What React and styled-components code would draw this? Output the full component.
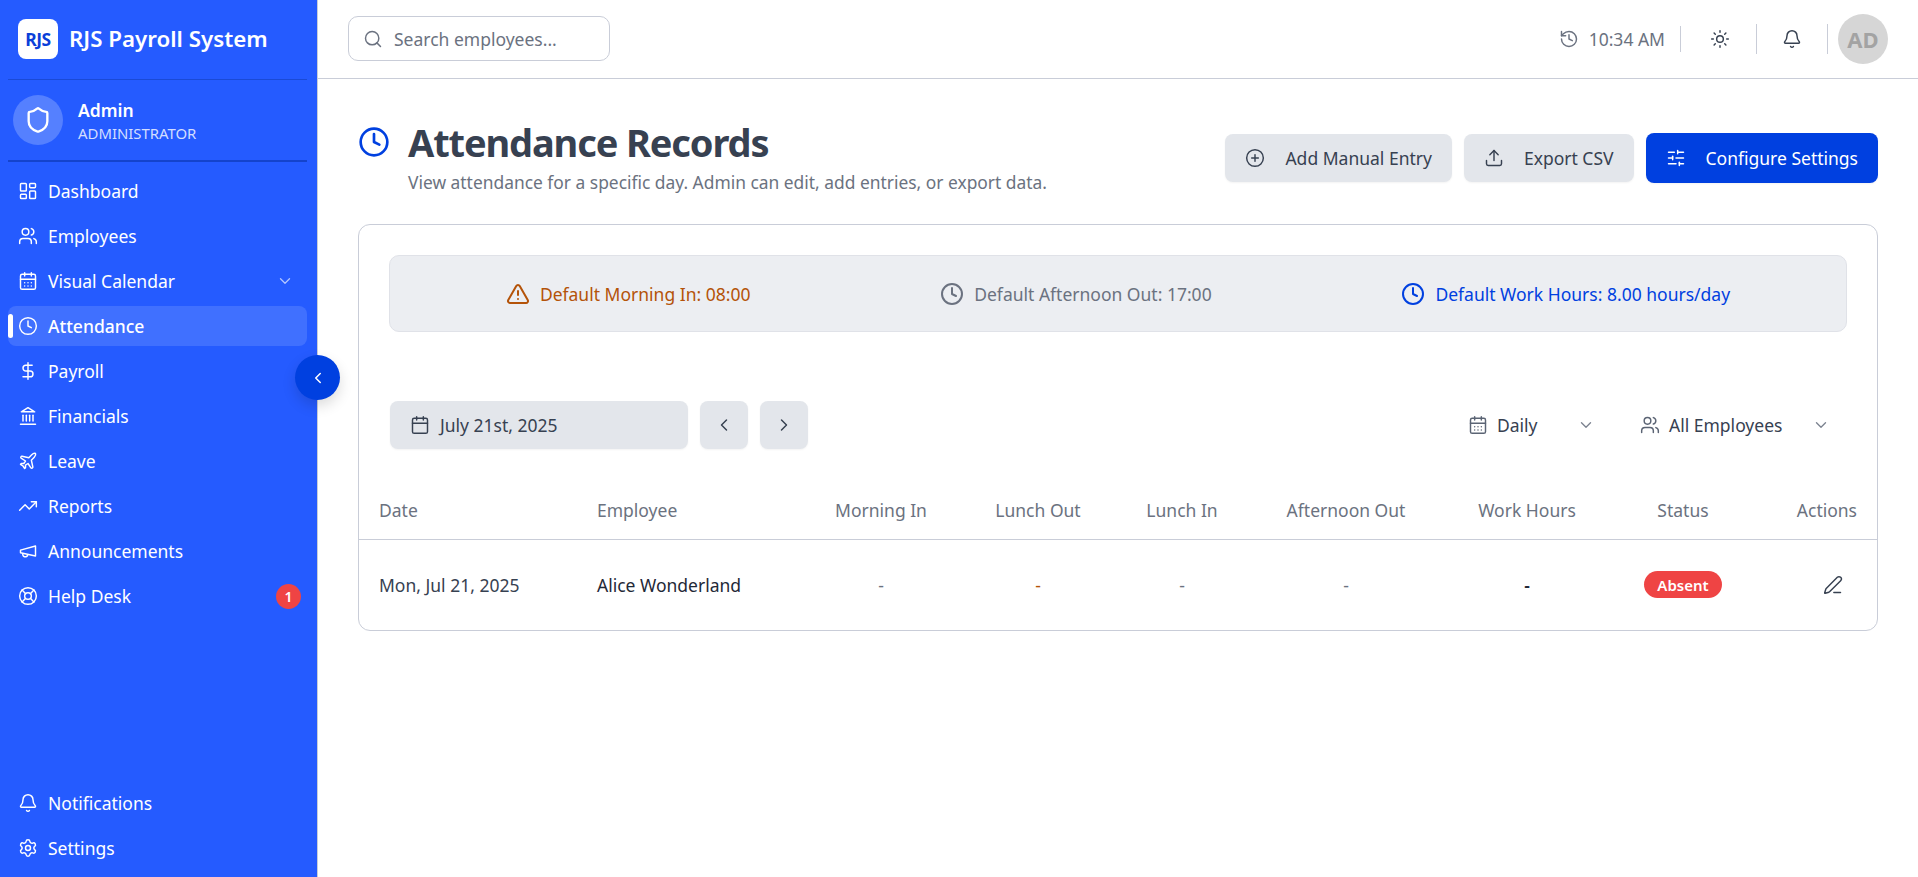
import React from "react";
import styled, { createGlobalStyle, css } from "styled-components";
import {
  LayoutDashboard, Users, CalendarDays, ChevronDown, Clock, DollarSign, Plane,
  TrendingUp, LifeBuoy, Bell, Settings, Shield, Search, History, Sun, CirclePlus,
  Upload, SlidersHorizontal, TriangleAlert, Calendar, ChevronLeft, ChevronRight, PenLine,
} from "lucide-react";

const Global = createGlobalStyle`
  * { box-sizing: border-box; }
  html, body { margin: 0; padding: 0; background: #fff; }
  body { font-family: "Noto Sans", "Open Sans", sans-serif; color: #374151; }
`;

const thinIcons = css`
  svg {
    stroke-width: 1.75;
  }
`;

const Shell = styled.div`
  display: flex;
  height: 877px;
  overflow: hidden;
  position: relative;
`;

const Sidebar = styled.aside`
  width: 318px;
  flex: none;
  background: #255bff;
  border-right: 1px solid #c9cdd8;
  color: #fff;
  display: flex;
  flex-direction: column;
  padding: 0 10px 9px 8px;
`;

const Brand = styled.div`
  height: 80px;
  flex: none;
  display: flex;
  align-items: center;
  gap: 11px;
  padding: 0 0 2px 10px;
  border-bottom: 1px solid #1a4ad6;
`;

const LogoBox = styled.div`
  width: 40px;
  height: 40px;
  border-radius: 8px;
  background: #fff;
  color: #0b3fd9;
  font-size: 17.5px;
  font-weight: 700;
  letter-spacing: -0.5px;
  display: flex;
  align-items: center;
  justify-content: center;
`;

const BrandName = styled.div`
  font-size: 22.3px;
  font-weight: 600;
  white-space: nowrap;
`;

const Profile = styled.div`
  height: 82px;
  flex: none;
  display: flex;
  align-items: center;
  gap: 15px;
  padding-left: 5px;
  border-bottom: 2px solid #1443cc;
`;

const ProfileAvatar = styled.div`
  width: 50px;
  height: 50px;
  border-radius: 50%;
  background: #5580ff;
  display: flex;
  align-items: center;
  justify-content: center;
`;

const ProfileText = styled.div`
  display: flex;
  flex-direction: column;
  gap: 1px;
  padding-top: 2px;
`;

const ProfileName = styled.div`
  font-size: 17.5px;
  font-weight: 600;
  line-height: 22px;
`;

const ProfileRole = styled.div`
  font-size: 14.9px;
  line-height: 22px;
  color: #d3deff;
`;

const Nav = styled.nav`
  display: flex;
  flex-direction: column;
  gap: 5px;
  padding-top: 9px;
`;

const BottomNav = styled(Nav)`
  margin-top: auto;
  padding-top: 0;
`;

const NavItem = styled.div`
  position: relative;
  height: 40px;
  display: flex;
  align-items: center;
  gap: 10px;
  padding: 0 10px;
  border-radius: 8px;
  font-size: 17.5px;
  background: ${(p) => (p.$active ? "#4070ff" : "transparent")};
  font-weight: ${(p) => (p.$active ? 500 : 400)};
  ${thinIcons}
`;

const ActiveBar = styled.span`
  position: absolute;
  left: 0;
  top: 8px;
  width: 5px;
  height: 24px;
  border-radius: 3px;
  background: #fff;
`;

const NavLabel = styled.span`
  flex: 1;
`;

const NavChevron = styled(ChevronDown)`
  opacity: 0.65;
  margin-right: 3px;
`;

const NavBadge = styled.span`
  width: 25px;
  height: 25px;
  border-radius: 50%;
  background: #ef4444;
  color: #fff;
  font-size: 14px;
  font-weight: 600;
  display: flex;
  align-items: center;
  justify-content: center;
  margin-right: -4px;
`;

const CollapseButton = styled.button`
  position: absolute;
  left: 295px;
  top: 355px;
  width: 45px;
  height: 45px;
  padding: 0;
  border: 0;
  border-radius: 50%;
  background: #0040e0;
  color: #fff;
  display: flex;
  align-items: center;
  justify-content: center;
  box-shadow: 0 6px 14px rgba(0, 0, 0, 0.14);
`;

const Main = styled.div`
  flex: 1;
  min-width: 0;
  display: flex;
  flex-direction: column;
`;

const TopBar = styled.header`
  height: 79px;
  flex: none;
  display: flex;
  align-items: center;
  justify-content: space-between;
  padding: 0 30px 1px 30px;
  border-bottom: 1px solid #c9cdd8;
`;

const SearchBox = styled.div`
  width: 262px;
  height: 45px;
  border: 1px solid #c9cdd8;
  border-radius: 10px;
  display: flex;
  align-items: center;
  gap: 11px;
  padding: 0 14px;
  color: #6b7280;
  font-size: 17.5px;
  ${thinIcons}
`;

const TopTools = styled.div`
  display: flex;
  align-items: center;
`;

const TimeText = styled.div`
  display: flex;
  align-items: center;
  gap: 10px;
  color: #6b7280;
  font-size: 17.5px;
  padding-right: 15px;
  height: 26px;
  border-right: 1px solid #c9cdd8;
  ${thinIcons}
`;

const ToolButton = styled.div`
  width: ${(p) => p.$w}px;
  height: 30px;
  padding-left: ${(p) => p.$shift || 0}px;
  display: flex;
  align-items: center;
  justify-content: center;
  color: #374151;
  border-right: 1px solid #c9cdd8;
  ${thinIcons}
`;

const UserAvatar = styled.div`
  width: 50px;
  height: 50px;
  margin-left: 10px;
  border-radius: 50%;
  background: #d6d6d6;
  color: #a3a3a3;
  font-size: 22px;
  font-weight: 700;
  display: flex;
  align-items: center;
  justify-content: center;
`;

const Page = styled.main`
  padding: 43px 40px 0;
`;

const PageHead = styled.div`
  display: flex;
  justify-content: space-between;
  align-items: center;
`;

const TitleBlock = styled.div`
  display: grid;
  grid-template-columns: 34px 1fr;
  column-gap: 16px;
  align-items: center;
`;

const Title = styled.h1`
  margin: 0;
  font-size: 38px;
  line-height: 40px;
  font-weight: 700;
  letter-spacing: -1.12px;
  color: #374151;
`;

const Subtitle = styled.p`
  grid-column: 2;
  margin: 8px 0 0;
  font-size: 17.4px;
  line-height: 24px;
  color: #6b7280;
`;

const TitleIcon = styled(Clock)`
  color: #0040e0;
`;

const Actions = styled.div`
  display: flex;
  align-items: center;
  gap: 12px;
  padding-bottom: 1px;
`;

const Button = styled.button`
  height: ${(p) => (p.$primary ? 50 : 48)}px;
  padding: 0 20px;
  border: 0;
  border-radius: 8px;
  display: flex;
  align-items: center;
  gap: 20px;
  font-family: inherit;
  font-size: 17.5px;
  font-weight: 400;
  background: ${(p) => (p.$primary ? "#0040e0" : "#e3e6eb")};
  color: ${(p) => (p.$primary ? "#fff" : "#374151")};
  box-shadow: 0 1px 2px rgba(0, 0, 0, 0.05);
  ${thinIcons}
`;

const Card = styled.section`
  margin-top: 30px;
  border: 1px solid #c9cdd8;
  border-radius: 12px;
  overflow: hidden;
`;

const CardTop = styled.div`
  padding: 30px 30px 0;
`;

const Banner = styled.div`
  height: 77px;
  padding: 0 21px;
  display: flex;
  align-items: center;
  justify-content: space-around;
  background: #eceef2;
  border: 1px solid #e0e2e8;
  border-radius: 10px;
`;

const BannerItem = styled.div`
  display: flex;
  align-items: center;
  gap: 10px;
  font-size: 17.5px;
  color: ${(p) => p.$color};
`;

const Filters = styled.div`
  margin-top: 69px;
  padding-left: 1px;
  padding-right: 7px;
  display: flex;
  align-items: center;
  justify-content: space-between;
`;

const FilterGroup = styled.div`
  display: flex;
  align-items: center;
  gap: 12px;
`;

const SelectGroup = styled.div`
  display: flex;
  align-items: center;
  gap: 25px;
`;

const DateButton = styled(Button)`
  width: 298px;
  gap: 10px;
  padding: 0 20px;
`;

const IconButton = styled(Button)`
  width: 48px;
  padding: 0;
  justify-content: center;
`;

const SelectTrigger = styled.div`
  width: ${(p) => p.$w}px;
  height: 48px;
  display: flex;
  align-items: center;
  gap: 9px;
  padding: 0 10px;
  font-size: 17.5px;
  color: #374151;
  ${thinIcons}
  svg {
    color: #5b6474;
  }
`;

const SelectLabel = styled.span`
  flex: 1;
`;

const MutedChevron = styled(ChevronDown)`
  opacity: 0.8;
`;

const Table = styled.table`
  width: 100%;
  table-layout: fixed;
  border-collapse: collapse;
  margin-top: 32px;
  font-size: 17.5px;
`;

const Th = styled.th`
  height: 58px;
  padding: 0 20px;
  font-weight: 400;
  color: #6b7280;
  text-align: ${(p) => p.$align || "center"};
  border-bottom: 1px solid #c9cdd8;
  white-space: nowrap;
`;

const Td = styled.td`
  height: 91px;
  padding: 0 20px;
  text-align: ${(p) => p.$align || "center"};
  color: ${(p) => p.$color || "#6b7280"};
  font-weight: ${(p) => p.$weight || 400};
  white-space: nowrap;
`;

const Badge = styled.span`
  display: inline-flex;
  align-items: center;
  justify-content: center;
  width: 78px;
  height: 27px;
  border-radius: 14px;
  background: #ef4444;
  color: #fff;
  font-size: 15px;
  font-weight: 600;
`;

const EditButton = styled.button`
  width: 48px;
  height: 40px;
  padding: 0;
  border: 0;
  background: none;
  color: #374151;
  display: inline-flex;
  align-items: center;
  justify-content: center;
  vertical-align: middle;
  ${thinIcons}
`;

function LineIcon({ size = 20, children }) {
  return (
    <svg width={size} height={size} viewBox="0 0 24 24" fill="none" stroke="currentColor" strokeWidth="2" strokeLinecap="round" strokeLinejoin="round">
      {children}
    </svg>
  );
}

const OldMegaphone = ({ size }) => (
  <LineIcon size={size}>
    <path d="m3 11 18-5v12L3 14v-3z" />
    <path d="M11.6 16.8a3 3 0 1 1-5.8-1.6" />
  </LineIcon>
);

const OldLandmark = ({ size }) => (
  <LineIcon size={size}>
    <path d="M3 22h18" />
    <path d="M6 18v-7" />
    <path d="M10 18v-7" />
    <path d="M14 18v-7" />
    <path d="M18 18v-7" />
    <polygon points="12 2 20 7 4 7" />
  </LineIcon>
);

const mainNav = [
  [LayoutDashboard, "Dashboard"],
  [Users, "Employees"],
  [CalendarDays, "Visual Calendar", "chev"],
  [Clock, "Attendance", "active"],
  [DollarSign, "Payroll"],
  [OldLandmark, "Financials"],
  [Plane, "Leave"],
  [TrendingUp, "Reports"],
  [OldMegaphone, "Announcements"],
  [LifeBuoy, "Help Desk", "badge"],
];

const widths = [218, 225, 158, 156, 132, 196, 166, 146, 121];

export default function App() {
  return (
    <Shell>
      <Global />
      <Sidebar>
        <Brand>
          <LogoBox>RJS</LogoBox>
          <BrandName>RJS Payroll System</BrandName>
        </Brand>
        <Profile>
          <ProfileAvatar>
            <Shield size={28} />
          </ProfileAvatar>
          <ProfileText>
            <ProfileName>Admin</ProfileName>
            <ProfileRole>ADMINISTRATOR</ProfileRole>
          </ProfileText>
        </Profile>
        <Nav>
          {mainNav.map(([Icon, label, kind]) => (
            <NavItem key={label} $active={kind === "active"}>
              {kind === "active" && <ActiveBar />}
              <Icon size={20} />
              <NavLabel>{label}</NavLabel>
              {kind === "chev" && <NavChevron size={18} />}
              {kind === "badge" && <NavBadge>1</NavBadge>}
            </NavItem>
          ))}
        </Nav>
        <BottomNav>
          <NavItem>
            <Bell size={20} />
            <NavLabel>Notifications</NavLabel>
          </NavItem>
          <NavItem>
            <Settings size={20} />
            <NavLabel>Settings</NavLabel>
          </NavItem>
        </BottomNav>
      </Sidebar>
      <CollapseButton aria-label="Collapse sidebar">
        <ChevronLeft size={18} />
      </CollapseButton>
      <Main>
        <TopBar>
          <SearchBox>
            <Search size={20} />
            <span>Search employees...</span>
          </SearchBox>
          <TopTools>
            <TimeText>
              <History size={20} />
              <span>10:34 AM</span>
            </TimeText>
            <ToolButton $w={76} $shift={3}>
              <Sun size={20} />
            </ToolButton>
            <ToolButton $w={71}>
              <Bell size={20} />
            </ToolButton>
            <UserAvatar>AD</UserAvatar>
          </TopTools>
        </TopBar>
        <Page>
          <PageHead>
            <TitleBlock>
              <TitleIcon size={32} />
              <Title>Attendance Records</Title>
              <Subtitle>View attendance for a specific day. Admin can edit, add entries, or export data.</Subtitle>
            </TitleBlock>
            <Actions>
              <Button>
                <CirclePlus size={20} />
                Add Manual Entry
              </Button>
              <Button>
                <Upload size={20} />
                Export CSV
              </Button>
              <Button $primary>
                <SlidersHorizontal size={20} />
                Configure Settings
              </Button>
            </Actions>
          </PageHead>
          <Card>
            <CardTop>
              <Banner>
                <BannerItem $color="#b45309">
                  <TriangleAlert size={24} />
                  Default Morning In: 08:00
                </BannerItem>
                <BannerItem $color="#6b7280">
                  <Clock size={24} />
                  Default Afternoon Out: 17:00
                </BannerItem>
                <BannerItem $color="#0040e0">
                  <Clock size={24} />
                  Default Work Hours: 8.00 hours/day
                </BannerItem>
              </Banner>
              <Filters>
                <FilterGroup>
                  <DateButton>
                    <Calendar size={20} />
                    July 21st, 2025
                  </DateButton>
                  <IconButton aria-label="Previous day">
                    <ChevronLeft size={20} />
                  </IconButton>
                  <IconButton aria-label="Next day">
                    <ChevronRight size={20} />
                  </IconButton>
                </FilterGroup>
                <SelectGroup>
                  <SelectTrigger $w={147}>
                    <CalendarDays size={20} />
                    <SelectLabel>Daily</SelectLabel>
                    <MutedChevron size={18} />
                  </SelectTrigger>
                  <SelectTrigger $w={210}>
                    <Users size={20} />
                    <SelectLabel>All Employees</SelectLabel>
                    <MutedChevron size={18} />
                  </SelectTrigger>
                </SelectGroup>
              </Filters>
            </CardTop>
            <Table>
              <colgroup>
                {widths.map((w, i) => (
                  <col key={i} width={w} />
                ))}
              </colgroup>
              <thead>
                <tr>
                  <Th $align="left">Date</Th>
                  <Th $align="left">Employee</Th>
                  <Th>Morning In</Th>
                  <Th>Lunch Out</Th>
                  <Th>Lunch In</Th>
                  <Th>Afternoon Out</Th>
                  <Th>Work Hours</Th>
                  <Th>Status</Th>
                  <Th $align="right">Actions</Th>
                </tr>
              </thead>
              <tbody>
                <tr>
                  <Td $align="left" $color="#374151">Mon, Jul 21, 2025</Td>
                  <Td $align="left" $color="#1f2937" $weight={400}>Alice Wonderland</Td>
                  <Td>-</Td>
                  <Td $color="#b45309">-</Td>
                  <Td>-</Td>
                  <Td>-</Td>
                  <Td $color="#1f2937" $weight={600}>-</Td>
                  <Td><Badge>Absent</Badge></Td>
                  <Td $align="right">
                    <EditButton aria-label="Edit"><PenLine size={20} /></EditButton>
                  </Td>
                </tr>
              </tbody>
            </Table>
          </Card>
        </Page>
      </Main>
    </Shell>
  );
}
